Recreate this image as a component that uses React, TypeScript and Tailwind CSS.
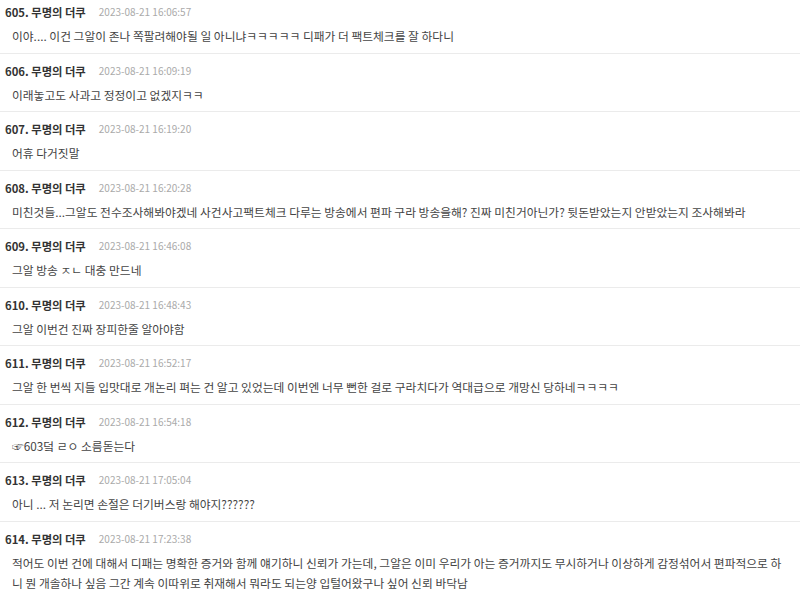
import React from "react";

type Entry = { no: number; date: string; body: string };

const entries: Entry[] = [
  { no: 605, date: "2023-08-21 16:06:57", body: "이야.... 이건 그알이 존나 쪽팔려해야될 일 아니냐ㅋㅋㅋㅋㅋ 디패가 더 팩트체크를 잘 하다니" },
  { no: 606, date: "2023-08-21 16:09:19", body: "이래놓고도 사과고 정정이고 없겠지ㅋㅋ" },
  { no: 607, date: "2023-08-21 16:19:20", body: "어휴 다거짓말" },
  { no: 608, date: "2023-08-21 16:20:28", body: "미친것들...그알도 전수조사해봐야겠네 사건사고팩트체크 다루는 방송에서 편파 구라 방송을해? 진짜 미친거아닌가? 뒷돈받았는지 안받았는지 조사해봐라" },
  { no: 609, date: "2023-08-21 16:46:08", body: "그알 방송 ㅈㄴ 대충 만드네" },
  { no: 610, date: "2023-08-21 16:48:43", body: "그알 이번건 진짜 장피한줄 알아야함" },
  { no: 611, date: "2023-08-21 16:52:17", body: "그알 한 번씩 지들 입맛대로 개논리 펴는 건 알고 있었는데 이번엔 너무 뻔한 걸로 구라치다가 역대급으로 개망신 당하네ㅋㅋㅋㅋ" },
  { no: 612, date: "2023-08-21 16:54:18", body: "☞603덬 ㄹㅇ 소름돋는다" },
  { no: 613, date: "2023-08-21 17:05:04", body: "아니 ... 저 논리면 손절은 더기버스랑 해야지??????" },
  { no: 614, date: "2023-08-21 17:23:38", body: "적어도 이번 건에 대해서 디패는 명확한 증거와 함께 얘기하니 신뢰가 가는데, 그알은 이미 우리가 아는 증거까지도 무시하거나 이상하게 감정섞어서 편파적으로 하니 뭔 개솔하나 싶음 그간 계속 이따위로 취재해서 뭐라도 되는양 입털어왔구나 싶어 신뢰 바닥남" },
];

export default function App() {
  return (
    <div
      className="w-[800px] h-[596px] overflow-hidden bg-white"
      style={{ fontFamily: '"Noto Sans CJK KR", "Noto Sans", sans-serif' }}
    >
      <div className="-mt-[5px]">
        {entries.map((e) => (
          <div key={e.no} className="border-b border-[#ebebeb] pt-[9px] pb-[6.5px]">
            <div className="flex items-center h-[16px] pl-[5px] leading-[16px]">
              <span className="text-[11.3px] font-bold text-[#333]">{e.no}. 무명의 더쿠</span>
              <span className="ml-[13px] text-[10px] text-[#aaa]">{e.date}</span>
            </div>
            <div className="mt-[6px] pl-[12px] pr-[12px] text-[11.75px] leading-[20px] text-[#444] break-all">
              {e.body}
            </div>
          </div>
        ))}
      </div>
    </div>
  );
}
